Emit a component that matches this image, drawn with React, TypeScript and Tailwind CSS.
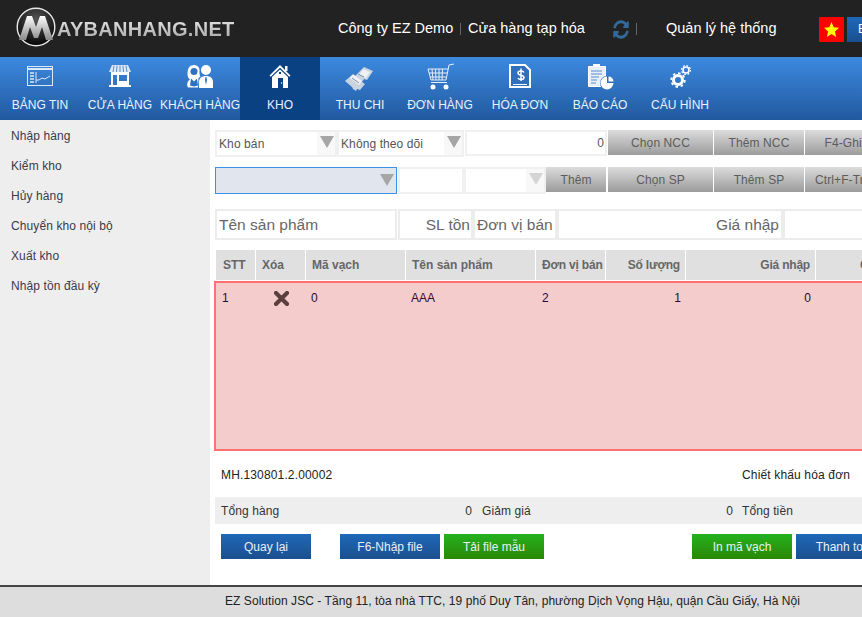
import React from "react";
import { FaSyncAlt } from "react-icons/fa";

const NAV_ITEMS = [
  { label: "BẢNG TIN", icon: "dashboard" },
  { label: "CỬA HÀNG", icon: "store" },
  { label: "KHÁCH HÀNG", icon: "users" },
  { label: "KHO", icon: "house", active: true },
  { label: "THU CHI", icon: "money" },
  { label: "ĐƠN HÀNG", icon: "cart" },
  { label: "HÓA ĐƠN", icon: "invoice" },
  { label: "BÁO CÁO", icon: "report" },
  { label: "CẤU HÌNH", icon: "gears" },
];

const SIDE_ITEMS = ["Nhập hàng", "Kiểm kho", "Hủy hàng", "Chuyển kho nội bộ", "Xuất kho", "Nhập tồn đầu kỳ"];

function NavIcon({ name }: { name: string }) {
  const cls = "w-[30px] h-[30px]";
  switch (name) {
    case "dashboard":
      return (
        <svg viewBox="0 0 30 30" className={cls} fill="none" stroke="#dbe8f8">
          <rect x="2.500" y="4.500" width="25" height="19" strokeWidth="1" />
          <path d="M3 7h24" strokeWidth="2" />
          <path d="M5 11h4M5 14h4M5 17h4M5 20h4" strokeWidth="1.500" />
          <path d="M11 10v11M11 18h3l3-2 3 1 5-3" strokeWidth="1" />
        </svg>
      );
    case "store":
      return (
        <svg viewBox="0 0 30 30" className={cls} fill="#fff">
          <path d="M7 3h16l3 7H4z" fill="#dfe9f6" />
          <path d="M9 3.500 8 10M12 3.500 11.500 10M15 3.500V10M18 3.500l.5 6.500M21 3.500l1 6.500" stroke="#5b8ecb" strokeWidth="1" />
          <path d="M6 10h18v13h2v2H4v-2h2zm2 3v10h4V13zm6 0v6h8v-6z" fillRule="evenodd" />
        </svg>
      );
    case "users":
      return (
        <svg viewBox="0 0 30 30" className={cls} fill="#fff">
          <circle cx="21" cy="8" r="5" />
          <path d="M14 26v-6c0-4 3-6 7-6s7 2 7 6v6z" />
          <path d="M20.500 15h1l.5 3-1 5-1-5z" fill="#2f70bf" />
          <path d="M9 3c4 0 6 3 5.500 6.500-.3 3 .5 4 1 5l-2 1.500-.5 9.500H3c-1.500-3-1-6 2-8-1.500-1-2.500-3-2.500-5C2.500 7 4 3 9 3z" />
          <circle cx="9" cy="9.500" r="3.500" fill="#2f70bf" />
          <path d="M6 16.500l3 3 3-3 1 7-4 1-4-1z" fill="#2f70bf" />
        </svg>
      );
    case "house":
      return (
        <svg viewBox="0 0 30 30" className={cls} fill="#fff">
          <path d="M15 3 25.500 13.500l-1.200 1.300L15 5.800 5.700 14.800 4.500 13.500z" />
          <path d="M20 4h2.500v5H20z" />
          <path d="M15 7.500 23 15v11H7V15z" />
          <path d="M13 16h5v10h-5z" fill="#0a4183" />
          <path d="M14 10h2v2h-2z" fill="#0a4183" />
          <circle cx="16.500" cy="21" r=".7" />
        </svg>
      );
    case "money":
      return (
        <svg viewBox="0 0 30 30" className={cls}>
          <path d="M19 5l9 4-6 9-3-1-2 3 3 2-5 6-3-1-1 2-3-2-1-2-7-6 7-6 3 1z" fill="#c9d4df" />
          <path d="M18 7l7 3-4 6-7-3zM8 12l9 7-3 4-9-7z" fill="#eef2f6" />
          <path d="M7 16l7 5M13 12l6 3" stroke="#7a8ea6" strokeWidth="1" fill="none" />
        </svg>
      );
    case "cart":
      return (
        <svg viewBox="0 0 30 30" className={cls} fill="none" stroke="#e6effa">
          <path d="M29 2l-5 1-3 15H6L3 7h20" strokeWidth="1" />
          <path d="M4 11h18M5 15h16M7 7l1 11M10.500 7l.5 11M14 7v11M17.500 7l-.5 11M6 20.500h16" strokeWidth="1" />
          <circle cx="8" cy="25" r="2.500" fill="#fff" stroke="none" />
          <circle cx="21" cy="25" r="2.500" fill="#fff" stroke="none" />
        </svg>
      );
    case "invoice":
      return (
        <svg viewBox="0 0 30 30" className={cls} fill="none" stroke="#fff">
          <path d="M5 3h15l5 5v17H5z" strokeWidth="2" fill="#2f6fbd" />
          <path d="M8 22.500h14" strokeWidth="1" />
          <path d="M19 10.500c-1-2-6-2-6 .5 0 3 6 1.500 6 4.500 0 2.500-5 2.500-6 .5M16 6.500v12.500" strokeWidth="1.500" />
        </svg>
      );
    case "report":
      return (
        <svg viewBox="0 0 30 30" className={cls} fill="none">
          <path d="M3.500 4.500h17v20h-17z" fill="#e6effa" stroke="#fff" />
          <path d="M8 2h7v3H8z" fill="#fff" />
          <path d="M6 9h11M6 12h11M6 15h8M6 18h6M6 21h5" stroke="#5b8ecb" />
          <circle cx="22" cy="21" r="7" fill="#2f6fbd" />
          <path d="M22 21v-6.500a6.500 6.500 0 1 0 6.500 6.500z" fill="#fff" />
          <path d="M23.500 19.500v-5a5 5 0 0 1 5 5z" fill="#fff" />
        </svg>
      );
    default:
      return (
        <svg viewBox="0 0 30 30" className={cls} fill="none" stroke="#fff">
          <circle cx="13" cy="18" r="4.500" strokeWidth="3" />
          <circle cx="13" cy="18" r="6.800" strokeWidth="1.800" strokeDasharray="2.600 2.700" />
          <circle cx="21" cy="8" r="3" strokeWidth="1.600" />
          <circle cx="21" cy="8" r="4.500" strokeWidth="1.200" strokeDasharray="1.800 1.700" />
        </svg>
      );
  }
}

function Arrow({ light }: { light?: boolean }) {
  return (
    <div className="w-[18px] h-full shrink-0 flex items-center justify-end pr-[1px] bg-[#f8f8f8] pb-[3px]">
      <svg viewBox="0 0 14 12" className="w-[14px] h-[12px]">
        <path d="M0 0h14l-7 12z" fill={light ? "#d4d4d4" : "#a6a6a6"} />
      </svg>
    </div>
  );
}

function GrayButton({ label, className }: { label: string; className: string }) {
  return (
    <div className={`h-[25px] shrink-0 flex items-center justify-center bg-gradient-to-b from-[#dcdcdc] to-[#9c9c9c] text-[12px] tracking-[0.1px] text-[#5c5c5c] overflow-hidden whitespace-nowrap ${className}`}>
      {label}
    </div>
  );
}

function ColorButton({ label, className }: { label: string; className: string }) {
  return (
    <div className={`h-[25px] shrink-0 flex items-center justify-center text-[12px] text-[#e8f0f8] whitespace-nowrap ${className}`}>
      {label}
    </div>
  );
}

const BLUE = "bg-gradient-to-b from-[#1f68b8] to-[#1b4f8e]";
const GREEN = "bg-gradient-to-b from-[#22b21e] to-[#2a8704]";

export default function App() {
  return (
    <div className="w-[862px] h-[617px] overflow-hidden flex flex-col bg-white font-['Liberation_Sans',Arial,sans-serif]">
      {/* Header */}
      <header className="h-[57px] shrink-0 bg-[#222222] flex items-center pt-[1px] text-white text-[14.500px]">
        <div className="w-[338px] shrink-0 flex items-center pl-[16px] -mt-[4px]">
          <svg viewBox="0 0 40 40" className="w-[40px] h-[40px] shrink-0">
            <defs>
              <linearGradient id="logo-m" x1="0" y1="0" x2="0" y2="1">
                <stop offset="0" stopColor="#ffffff" />
                <stop offset="1" stopColor="#8a8a8a" />
              </linearGradient>
              <radialGradient id="logo-bg" cx="0.5" cy="0.3" r="0.7">
                <stop offset="0" stopColor="#555" />
                <stop offset="1" stopColor="#050505" />
              </radialGradient>
            </defs>
            <circle cx="20" cy="20" r="18.800" fill="url(#logo-bg)" stroke="#e8e8e8" strokeWidth="1.400" />
            <path d="M3 33 11 9h5l4 11 4-11h5l8 24h-7l-4-13-4 11h-4l-4-11-4 13z" fill="url(#logo-m)" />
          </svg>
          <span className="ml-[1px] mt-[3px] font-bold text-[20px] tracking-[0.300px] text-transparent bg-clip-text bg-gradient-to-b from-[#f5f5f5] to-[#9a9a9a] whitespace-nowrap">
            AYBANHANG.NET
          </span>
        </div>
        <span className="w-[116px] shrink-0 whitespace-nowrap">Công ty EZ Demo</span>
        <span className="w-[1px] h-[12px] bg-[#666] ml-[6px] mr-[7px] shrink-0" />
        <span className="w-[145px] shrink-0 whitespace-nowrap">Cửa hàng tạp hóa</span>
        <FaSyncAlt preserveAspectRatio="none" className="w-[16px] h-[19px] text-[#336a9c] shrink-0" />
        <span className="w-[1px] h-[12px] bg-[#666] ml-[7px] mr-[29px] shrink-0" />
        <span className="w-[153px] shrink-0 whitespace-nowrap">Quản lý hệ thống</span>
        <div className="w-[25px] h-[25px] bg-[#ff0000] shrink-0 flex items-center justify-center">
          <svg viewBox="0 0 24 24" className="w-[15px] h-[15px]">
            <path d="M12 0l3.500 8.500 8.500.7-6.500 5.800 2 9-7.500-4.800L4.500 24l2-9L0 9.200l8.500-.7z" fill="#ffff00" />
          </svg>
        </div>
        <div className={`w-[30px] h-[25px] ml-[3px] shrink-0 pl-[11px] flex items-center text-[12px] ${BLUE}`}>EN</div>
      </header>

      {/* Nav */}
      <nav className="h-[63px] shrink-0 flex bg-gradient-to-b from-[#3c8ae0] to-[#22599f]">
        {NAV_ITEMS.map((item) => (
          <div
            key={item.label}
            className={`w-[80px] shrink-0 flex flex-col items-center pt-[5px] ${item.active ? "bg-[#0a4183]" : ""}`}
          >
            <NavIcon name={item.icon} />
            <span className="mt-[3px] text-[12px] leading-[20px] text-[#e8f2fc] whitespace-nowrap">{item.label}</span>
          </div>
        ))}
      </nav>

      <div className="flex-1 flex min-h-0">
        {/* Sidebar */}
        <aside className="w-[210px] shrink-0 bg-[#eeeeee] pt-[1px]">
          {SIDE_ITEMS.map((s) => (
            <div key={s} className="h-[30px] pl-[11px] flex items-center text-[12px] tracking-[0.1px] text-[#3a3a4a]">{s}</div>
          ))}
        </aside>

        {/* Main */}
        <main className="flex-1 min-w-0 overflow-hidden pl-[5px] pt-[10px]">
          <div className="w-[900px]">
            {/* Row 1 */}
            <div className="flex h-[27px]">
              <div className="w-[122px] border-2 border-[#f0f0f0] flex items-center justify-between pl-[2px] text-[12px] tracking-[0.1px] text-[#555]">
                Kho bán <Arrow />
              </div>
              <div className="w-[127px] border-2 border-[#f0f0f0] flex items-center justify-between pl-[2px] text-[12px] tracking-[0.1px] text-[#555]">
                Không theo dõi <Arrow />
              </div>
              <div className="w-[142px] ml-[1px] h-[26px] border-2 border-[#f0f0f0] flex items-center justify-end pr-[1px] text-[12px] text-[#555]">0</div>
              <GrayButton label="Chọn NCC" className="w-[105px] ml-[1px]" />
              <GrayButton label="Thêm NCC" className="w-[90px] ml-[1px]" />
              <GrayButton label="F4-Ghi tạm" className="w-[100px] ml-[1px]" />
            </div>
            {/* Row 2 */}
            <div className="flex h-[27px] mt-[10px]">
              <div className="w-[182px] border border-[#3d8fe8] bg-[#e1e6ee] flex items-center justify-end pb-[1px]">
                <div className="w-[14px] mr-[2px] flex">
                  <svg viewBox="0 0 14 12" className="w-[14px] h-[12px]">
                    <path d="M0 0h14l-7 12z" fill="#a6a6a6" />
                  </svg>
                </div>
              </div>
              <div className="w-[66px] ml-[1px] border-2 border-[#f0f0f0]" />
              <div className="w-[82px] border-2 border-[#f0f0f0] flex items-center justify-end">
                <Arrow light />
              </div>
              <GrayButton label="Thêm" className="w-[60px]" />
              <GrayButton label="Chọn SP" className="w-[105px] ml-[2px]" />
              <GrayButton label="Thêm SP" className="w-[90px] ml-[1px]" />
              <GrayButton label="Ctrl+F-Tra cứu" className="w-[100px] ml-[1px]" />
            </div>
            {/* Row 3 */}
            <div className="flex h-[31px] mt-[15px] text-[15.500px] text-[#666]">
              <div className="w-[182px] border-2 border-[#ececec] flex items-center pl-[2px] pt-[1px]">Tên sản phẩm</div>
              <div className="w-[75px] ml-[1px] border-2 border-[#ececec] flex items-center justify-end pr-[1px] pt-[1px]">SL tồn</div>
              <div className="w-[84px] border-2 border-[#ececec] flex items-center pl-[2px] pt-[1px] whitespace-nowrap">Đơn vị bán</div>
              <div className="w-[226px] border-2 border-[#ececec] flex items-center justify-end pr-[2px] pt-[1px]">Giá nhập</div>
              <div className="w-[100px] border-2 border-[#ececec]" />
            </div>
            {/* Table header */}
            <div className="flex h-[30px] mt-[10px] ml-[1px] gap-[1px] text-[12px] font-bold text-[#666]">
              <div className="w-[39px] bg-[#e0e0e0] flex items-center pl-[7px]">STT</div>
              <div className="w-[49px] bg-[#e0e0e0] flex items-center pl-[6px]">Xóa</div>
              <div className="w-[99px] bg-[#e0e0e0] flex items-center pl-[6px]">Mã vạch</div>
              <div className="w-[129px] bg-[#e0e0e0] flex items-center pl-[6px]">Tên sản phẩm</div>
              <div className="w-[69px] bg-[#e0e0e0] flex items-center pl-[6px] tracking-[-0.2px] whitespace-nowrap">Đơn vị bán</div>
              <div className="w-[79px] bg-[#e0e0e0] flex items-center justify-end pr-[5px] tracking-[-0.2px]">Số lượng</div>
              <div className="w-[129px] bg-[#e0e0e0] flex items-center justify-end pr-[5px] tracking-[-0.2px]">Giá nhập</div>
              <div className="w-[100px] bg-[#e0e0e0] flex items-center pl-[44px] whitespace-nowrap">Giảm giá</div>
            </div>
            {/* Table body */}
            <div className="h-[170px] -ml-[1px] mt-[1px] border-2 border-[#ff7070] bg-[#f4cccc] text-[12px] text-[#2c0a3a]">
              <div className="flex h-[30px] items-center">
                <div className="w-[40px] pl-[6px]">1</div>
                <div className="w-[50px] flex justify-center">
                  <svg viewBox="0 0 15 15" className="w-[15px] h-[15px]">
                    <path d="M2 2l11 11M13 2 2 13" stroke="#5c3f3f" strokeWidth="4.200" strokeLinecap="round" />
                  </svg>
                </div>
                <div className="w-[100px] pl-[5px]">0</div>
                <div className="w-[130px] pl-[5px]">AAA</div>
                <div className="w-[70px] pl-[6px]">2</div>
                <div className="w-[80px] text-right pr-[5px]">1</div>
                <div className="w-[130px] text-right pr-[5px]">0</div>
              </div>
            </div>
            {/* Code + discount */}
            <div className="flex h-[46px] items-center pt-[2px] text-[12px] tracking-[0.15px] text-[#222]">
              <span className="w-[527px] pl-[6px]">MH.130801.2.00002</span>
              <span>Chiết khấu hóa đơn</span>
            </div>
            {/* Totals */}
            <div className="flex h-[27px] items-center bg-[#eeeeee] text-[12px] tracking-[0.1px] text-[#333]">
              <span className="w-[261px] pl-[6px] flex justify-between pr-[4px]">Tổng hàng <span>0</span></span>
              <span className="w-[261px] pl-[6px] flex justify-between pr-[4px]">Giảm giá <span>0</span></span>
              <span className="pl-[5px]">Tổng tiền</span>
            </div>
            {/* Buttons */}
            <div className="flex mt-[10px] pl-[6px]">
              <ColorButton label="Quay lại" className={`w-[90px] ${BLUE}`} />
              <ColorButton label="F6-Nhập file" className={`w-[100px] ml-[29px] ${BLUE}`} />
              <ColorButton label="Tải file mẫu" className={`w-[100px] ml-[4px] ${GREEN}`} />
              <ColorButton label="In mã vạch" className={`w-[100px] ml-[148px] ${GREEN}`} />
              <ColorButton label="Thanh toán" className={`w-[100px] ml-[4px] ${BLUE}`} />
            </div>
          </div>
        </main>
      </div>

      {/* Footer */}
      <footer className="h-[32px] shrink-0 border-t-2 border-[#444] bg-[#dddddd] flex items-center pl-[225px] pb-[2px] text-[12px] tracking-[0.06px] text-[#222] whitespace-nowrap">
        EZ Solution JSC - Tầng 11, tòa nhà TTC, 19 phố Duy Tân, phường Dịch Vọng Hậu, quận Cầu Giấy, Hà Nội
      </footer>
    </div>
  );
}
